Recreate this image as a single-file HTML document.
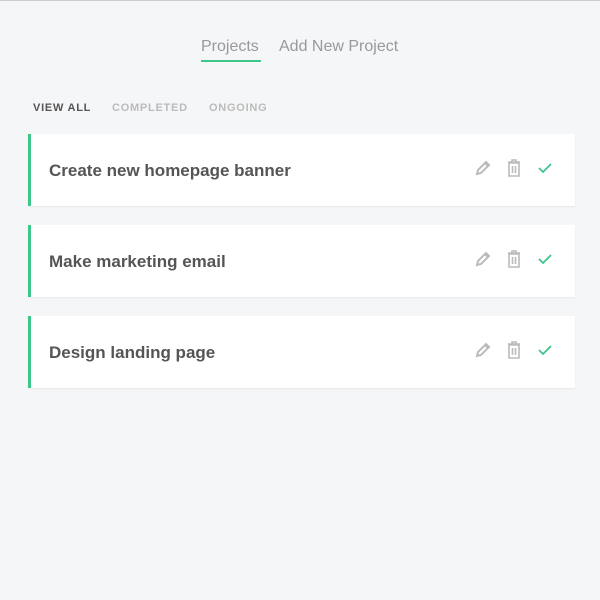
<!DOCTYPE html>
<html><head><style>
body{margin:0;width:600px;height:600px;background:#f5f6f8;font-family:"Liberation Sans",sans-serif;border-top:1px solid #ccc;box-sizing:border-box;position:relative;overflow:hidden}
.nav{position:absolute;top:37px;left:201px;font-size:16px;color:#999}
.nav span{position:absolute;white-space:nowrap}
.ul{position:absolute;left:201px;top:59px;width:60px;height:2px;background:#3ec78a}
.f{position:absolute;top:101px;font-size:11px;font-weight:bold;letter-spacing:0.75px;color:#bbb}
.card{position:absolute;left:28px;width:547px;height:72px;background:#fff;border-left:3px solid #3ec78a;box-sizing:border-box;box-shadow:0 1px 2px rgba(0,0,0,.06)}
.card .t{position:absolute;left:18px;top:27px;font-size:17px;font-weight:bold;color:#555}
.card svg{position:absolute;top:25px}
</style></head><body>
<div class="nav"><span style="left:0">Projects</span><span style="left:78px">Add New Project</span></div>
<div class="ul"></div>
<div class="f" style="left:33px;color:#555">VIEW ALL</div>
<div class="f" style="left:112px">COMPLETED</div>
<div class="f" style="left:209px">ONGOING</div>
<div class="card" style="top:133px"><div class="t">Create new homepage banner</div>
<svg style="left:443px" width="18" height="18" viewBox="0 0 18 18"><path d="M3 15l1-4 8-8 3 3-8 8z M11 4l3 3" fill="none" stroke="#bbb" stroke-width="2"/></svg>
<svg style="left:475px" width="16" height="18" viewBox="0 0 16 18"><path d="M2 3h12M6 3V1h4v2M3 4h10v13H3z M6.5 7v7M9.5 7v7" fill="none" stroke="#bbb" stroke-width="1.6"/></svg>
<svg style="left:506px" width="16" height="18" viewBox="0 0 16 18"><path d="M2 9l4 4 8-8" fill="none" stroke="#3ec78a" stroke-width="1.8"/></svg></div>
<div class="card" style="top:224px"><div class="t">Make marketing email</div>
<svg style="left:443px" width="18" height="18" viewBox="0 0 18 18"><path d="M3 15l1-4 8-8 3 3-8 8z M11 4l3 3" fill="none" stroke="#bbb" stroke-width="2"/></svg>
<svg style="left:475px" width="16" height="18" viewBox="0 0 16 18"><path d="M2 3h12M6 3V1h4v2M3 4h10v13H3z M6.5 7v7M9.5 7v7" fill="none" stroke="#bbb" stroke-width="1.6"/></svg>
<svg style="left:506px" width="16" height="18" viewBox="0 0 16 18"><path d="M2 9l4 4 8-8" fill="none" stroke="#3ec78a" stroke-width="1.8"/></svg></div>
<div class="card" style="top:315px"><div class="t">Design landing page</div>
<svg style="left:443px" width="18" height="18" viewBox="0 0 18 18"><path d="M3 15l1-4 8-8 3 3-8 8z M11 4l3 3" fill="none" stroke="#bbb" stroke-width="2"/></svg>
<svg style="left:475px" width="16" height="18" viewBox="0 0 16 18"><path d="M2 3h12M6 3V1h4v2M3 4h10v13H3z M6.5 7v7M9.5 7v7" fill="none" stroke="#bbb" stroke-width="1.6"/></svg>
<svg style="left:506px" width="16" height="18" viewBox="0 0 16 18"><path d="M2 9l4 4 8-8" fill="none" stroke="#3ec78a" stroke-width="1.8"/></svg></div>
</body></html>
